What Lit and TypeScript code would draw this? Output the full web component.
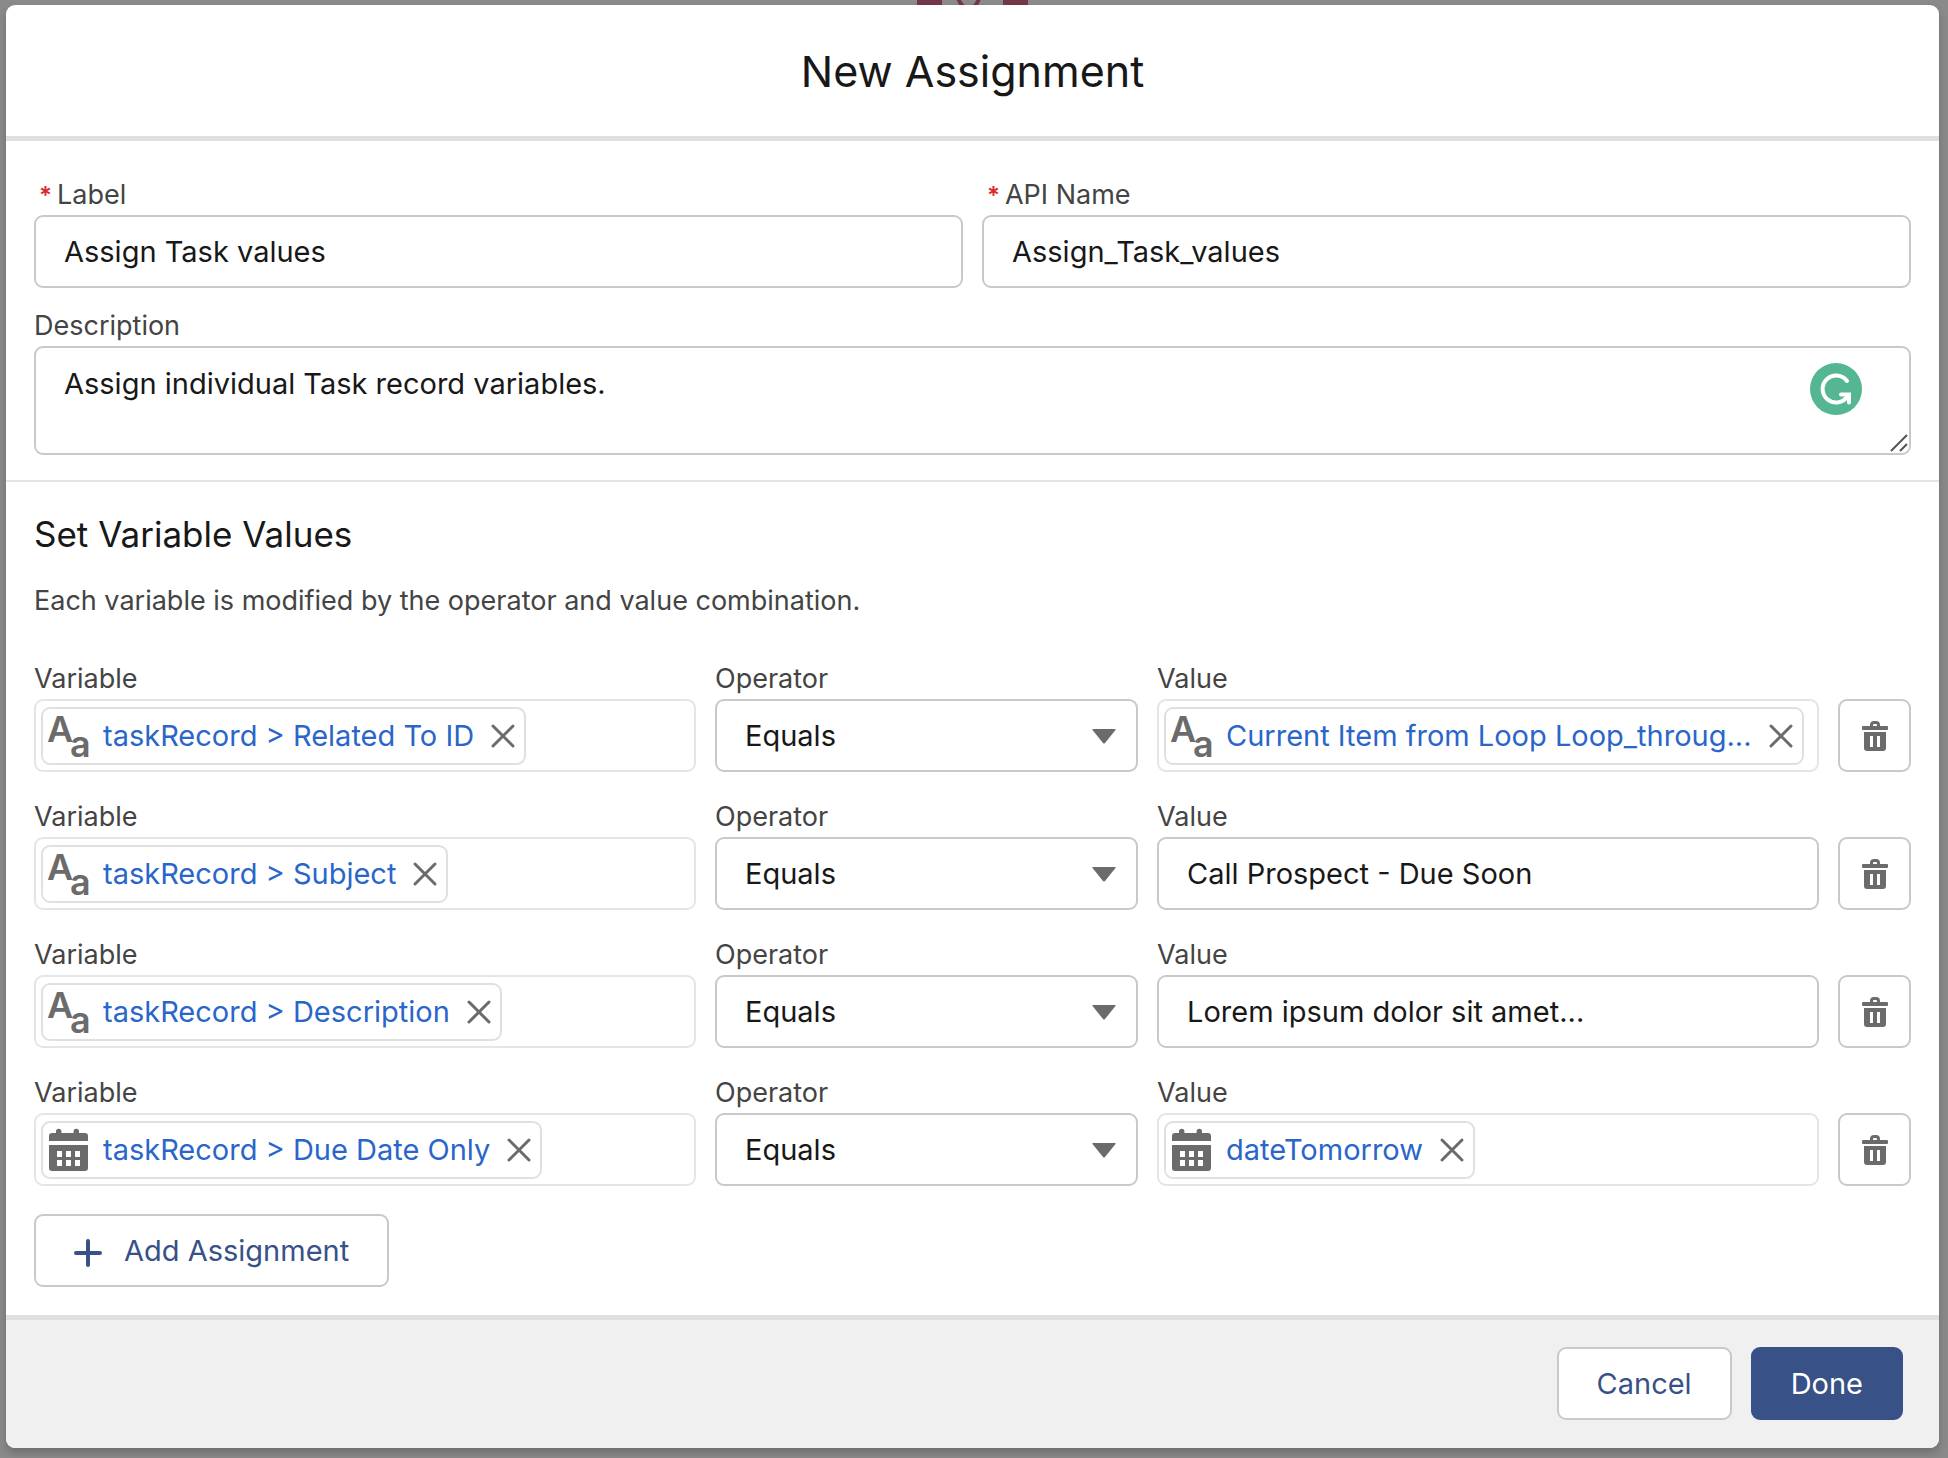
import { LitElement, html, css } from "lit";
import { customElement, property } from "lit/decorators.js";

type Resource = { kind: "text" | "date"; name: string };
type Assignment = { variable: Resource; operator: string; value: Resource | string };

const assignments: Assignment[] = [
  {
    variable: { kind: "text", name: "taskRecord > Related To ID" },
    operator: "Equals",
    value: { kind: "text", name: "Current Item from Loop Loop_throug..." },
  },
  {
    variable: { kind: "text", name: "taskRecord > Subject" },
    operator: "Equals",
    value: "Call Prospect - Due Soon",
  },
  {
    variable: { kind: "text", name: "taskRecord > Description" },
    operator: "Equals",
    value: "Lorem ipsum dolor sit amet...",
  },
  {
    variable: { kind: "date", name: "taskRecord > Due Date Only" },
    operator: "Equals",
    value: { kind: "date", name: "dateTomorrow" },
  },
];

const textIcon = html`<svg class="type-icon" viewBox="0 0 44 46" aria-hidden="true">
  <text class="type-letter" x="0" y="29">A</text>
  <text class="type-letter" x="23" y="44">a</text>
</svg>`;

const dateIcon = html`<svg class="type-icon" viewBox="0 0 44 46" aria-hidden="true">
  <path
    d="M2 14V9q0-3 3-3h4V4.500a2.700 2.700 0 0 1 5.400 0V6h12.200V4.500a2.700 2.700 0 0 1 5.400 0V6h6q3 0 3 3v5z"
  />
  <path
    fill-rule="evenodd"
    d="M2 18h39v23q0 3-3 3H5q-3 0-3-3zM10 24v6h5v-6zM19 24v6h5v-6zM28 24v6h5v-6zM10 33v6h5v-6zM19 33v6h5v-6zM28 33v6h5v-6z"
  />
</svg>`;

const controlStyles = css`
  * {
    box-sizing: border-box;
  }
  button,
  input,
  select,
  textarea {
    margin: 0;
    font-family: inherit;
    font-size: 29px;
    color: #181818;
  }
  button {
    cursor: pointer;
  }
  svg {
    display: block;
    flex: none;
  }
  .field {
    display: flex;
    flex-direction: column;
    gap: 2px;
    min-width: 0;
  }
  .label {
    font-size: 27px;
    line-height: 36px;
    color: #444;
  }
  .input {
    width: 100%;
    height: 73px;
    padding: 0 28px;
    border: 2px solid #c9c9c9;
    border-radius: 9px;
    background: #fff;
  }
`;

@customElement("resource-pill")
export class ResourcePill extends LitElement {
  @property({ attribute: false }) resource!: Resource;

  static styles = [
    controlStyles,
    css`
      :host {
        display: flex;
        box-sizing: border-box;
        min-width: 0;
        height: 73px;
        padding: 5px;
        border: 2px solid #e5e5e5;
        border-radius: 9px;
        align-items: center;
      }
      .pill {
        display: flex;
        align-items: center;
        height: 58px;
        min-width: 0;
        padding: 0 6px 0 4px;
        border: 2px solid #e0e0e0;
        border-radius: 9px;
      }
      .type-icon {
        width: 44px;
        height: 46px;
        overflow: visible;
        fill: #6b6b6b;
      }
      .type-letter {
        font-size: 36px;
        font-weight: 600;
      }
      .name {
        margin-left: 12px;
        overflow: hidden;
        white-space: nowrap;
        font-size: 29px;
        line-height: 40px;
        color: #2a66ca;
        text-decoration: none;
      }
      .remove {
        display: flex;
        margin-left: 14px;
        padding: 2px;
        border: 0;
        background: none;
      }
      .remove-icon {
        width: 26px;
        height: 26px;
        fill: none;
        stroke: #6b6b6b;
        stroke-width: 3;
        stroke-linecap: round;
      }
    `,
  ];

  render() {
    const { kind, name } = this.resource;
    return html`<div class="pill">
      ${kind === "text" ? textIcon : dateIcon}
      <a class="name" href="#">${name}</a>
      <button class="remove" type="button" aria-label="Remove">
        <svg class="remove-icon" viewBox="0 0 26 26"><path d="M3 3l20 20M23 3L3 23" /></svg>
      </button>
    </div>`;
  }
}

@customElement("assignment-row")
export class AssignmentRow extends LitElement {
  @property({ attribute: false }) assignment!: Assignment;

  static styles = [
    controlStyles,
    css`
      :host {
        display: grid;
        grid-template-columns: 662fr 423fr 662fr 73px;
        gap: 19px;
        align-items: end;
      }
      .picker {
        display: grid;
        align-items: center;
      }
      .select {
        grid-area: 1 / 1;
        appearance: none;
      }
      .caret {
        grid-area: 1 / 1;
        justify-self: end;
        width: 24px;
        height: 16px;
        margin-right: 22px;
        fill: #6b6b6b;
        pointer-events: none;
      }
      .delete {
        display: flex;
        align-items: center;
        justify-content: center;
        height: 73px;
        padding: 0;
        border: 2px solid #c9c9c9;
        border-radius: 9px;
        background: #fff;
      }
      .trash {
        width: 28px;
        height: 32px;
        fill: #6b6b6b;
      }
    `,
  ];

  render() {
    const { variable, operator, value } = this.assignment;
    return html`
      <div class="field" role="group" aria-labelledby="variable">
        <span class="label" id="variable">Variable</span>
        <resource-pill .resource=${variable}></resource-pill>
      </div>
      <div class="field">
        <label class="label" for="operator">Operator</label>
        <div class="picker">
          <select class="input select" id="operator">
            <option>${operator}</option>
          </select>
          <svg class="caret" viewBox="0 0 24 16" aria-hidden="true">
            <path d="M1 1h22q1 0 .5 1L13 15q-1 1-2 0L.5 2Q0 1 1 1z" />
          </svg>
        </div>
      </div>
      ${typeof value === "string"
        ? html`<div class="field">
            <label class="label" for="value">Value</label>
            <input class="input" id="value" type="text" .value=${value} />
          </div>`
        : html`<div class="field" role="group" aria-labelledby="value">
            <span class="label" id="value">Value</span>
            <resource-pill .resource=${value}></resource-pill>
          </div>`}
      <button class="delete" type="button" aria-label="Delete">
        <svg class="trash" viewBox="0 0 28 32">
          <path
            fill-rule="evenodd"
            d="M2 6h7V5q0-4 4-4h2q4 0 4 4v1h7q1 0 1 1v2q0 1-1 1H2q-1 0-1-1V7q0-1 1-1zM12 6h4V5q0-1-1-1h-2q-1 0-1 1z"
          />
          <path
            fill-rule="evenodd"
            d="M3 12h22v16q0 3-3 3H6q-3 0-3-3zM9 16v11h3V16zM16 16v11h3V16z"
          />
        </svg>
      </button>
    `;
  }
}

@customElement("app-root")
export class AppRoot extends LitElement {
  static styles = [
    controlStyles,
    css`
      :host {
        position: relative;
        display: flex;
        box-sizing: border-box;
        min-height: 100vh;
        padding: 5px 9px 10px 6px;
        background: #8a8a8a;
        font-family: Inter, "Liberation Sans", sans-serif;
        color: #181818;
      }
      .canvas-node {
        position: absolute;
        top: 0;
        left: 50%;
        width: 112px;
        height: 10px;
        margin-left: -57px;
      }
      .modal {
        position: relative;
        display: flex;
        flex: 1;
        flex-direction: column;
        min-width: 0;
        border-radius: 9px;
        overflow: hidden;
        background: #fff;
        box-shadow: 0 5px 8px rgba(0, 0, 0, 0.2);
      }
      .header {
        display: flex;
        align-items: center;
        justify-content: center;
        height: 136px;
        border-bottom: 5px solid #e0e0e0;
      }
      .title {
        margin: 0;
        font-size: 43px;
        line-height: 56px;
        font-weight: 400;
      }
      .properties {
        display: grid;
        grid-template-columns: 1fr 1fr;
        gap: 20px 19px;
        padding: 36px 28px 25px;
        border-bottom: 2px solid #e5e5e5;
      }
      .wide {
        grid-column: 1 / -1;
      }
      .required {
        margin: 0 5px;
        font-size: 24px;
        font-weight: 600;
        line-height: 1;
        color: #d92b2b;
      }
      .editor {
        position: relative;
        display: flex;
      }
      .textarea {
        height: auto;
        padding: 17px 28px 12px;
        line-height: 38px;
        resize: none;
      }
      .assistant {
        position: absolute;
        top: 17px;
        right: 49px;
        width: 52px;
        height: 52px;
      }
      .grip {
        position: absolute;
        right: 3px;
        bottom: 3px;
        width: 18px;
        height: 18px;
        stroke: #555;
        stroke-width: 2;
      }
      .values {
        display: flex;
        flex: 1;
        flex-direction: column;
        padding: 30px 28px 27px;
      }
      .heading {
        margin: 0;
        font-size: 35px;
        line-height: 44px;
        font-weight: 400;
      }
      .hint {
        margin: 27px 0 42px;
        font-size: 27px;
        line-height: 36px;
        color: #444;
      }
      .rows {
        display: flex;
        flex-direction: column;
        gap: 27px;
      }
      .button {
        display: flex;
        align-items: center;
        height: 73px;
        padding: 0 38px;
        border: 2px solid #c9c9c9;
        border-radius: 9px;
        background: #fff;
        color: #385187;
      }
      .add {
        align-self: flex-start;
        gap: 22px;
        margin-top: 28px;
      }
      .plus {
        width: 28px;
        height: 28px;
        margin-top: 4px;
        stroke: #385187;
        stroke-width: 4;
        stroke-linecap: round;
      }
      .footer {
        display: flex;
        justify-content: flex-end;
        gap: 19px;
        padding: 27px 36px 28px;
        border-top: 5px solid #e0e0e0;
        background: #f0f0f0;
      }
      .primary {
        border-color: #385187;
        background: #385187;
        color: #fff;
      }
    `,
  ];

  render() {
    return html`
      <svg class="canvas-node" viewBox="0 0 112 10" aria-hidden="true">
        <path fill="#733848" d="M0 0h25v10H0zM86 0h25v10H86z" />
        <path fill="none" stroke="#733848" stroke-width="4" d="M41 -2Q43 4 47 7M62 -2Q61 3 57 7" />
      </svg>
      <section class="modal" role="dialog" aria-labelledby="title">
        <header class="header"><h1 class="title" id="title">New Assignment</h1></header>
        <div class="properties">
          <div class="field">
            <label class="label" for="label"><span class="required">*</span>Label</label>
            <input class="input" id="label" type="text" value="Assign Task values" />
          </div>
          <div class="field">
            <label class="label" for="api-name"><span class="required">*</span>API Name</label>
            <input class="input" id="api-name" type="text" value="Assign_Task_values" />
          </div>
          <div class="field wide">
            <label class="label" for="description">Description</label>
            <div class="editor">
              <textarea
                class="input textarea"
                id="description"
                rows="2"
                .value=${"Assign individual Task record variables."}
              ></textarea>
              <svg class="assistant" viewBox="0 0 52 52" aria-hidden="true">
                <circle cx="26" cy="26" r="26" fill="#54b791" />
                <g fill="none" stroke="#fff" stroke-width="4" stroke-linecap="round">
                  <path d="M37 18A13.500 13.500 0 1 0 37 34" />
                  <path d="M31 31.500h8v8" />
                </g>
              </svg>
              <svg class="grip" viewBox="0 0 18 18" aria-hidden="true">
                <path d="M1 17L17 1M10 17l7-7" />
              </svg>
            </div>
          </div>
        </div>
        <div class="values">
          <h2 class="heading">Set Variable Values</h2>
          <p class="hint">Each variable is modified by the operator and value combination.</p>
          <div class="rows">
            ${assignments.map((a) => html`<assignment-row .assignment=${a}></assignment-row>`)}
          </div>
          <button class="button add" type="button">
            <svg class="plus" viewBox="0 0 28 28" aria-hidden="true">
              <path d="M2 14h24M14 2v24" />
            </svg>
            Add Assignment
          </button>
        </div>
        <footer class="footer">
          <button class="button" type="button">Cancel</button>
          <button class="button primary" type="button">Done</button>
        </footer>
      </section>
    `;
  }
}
